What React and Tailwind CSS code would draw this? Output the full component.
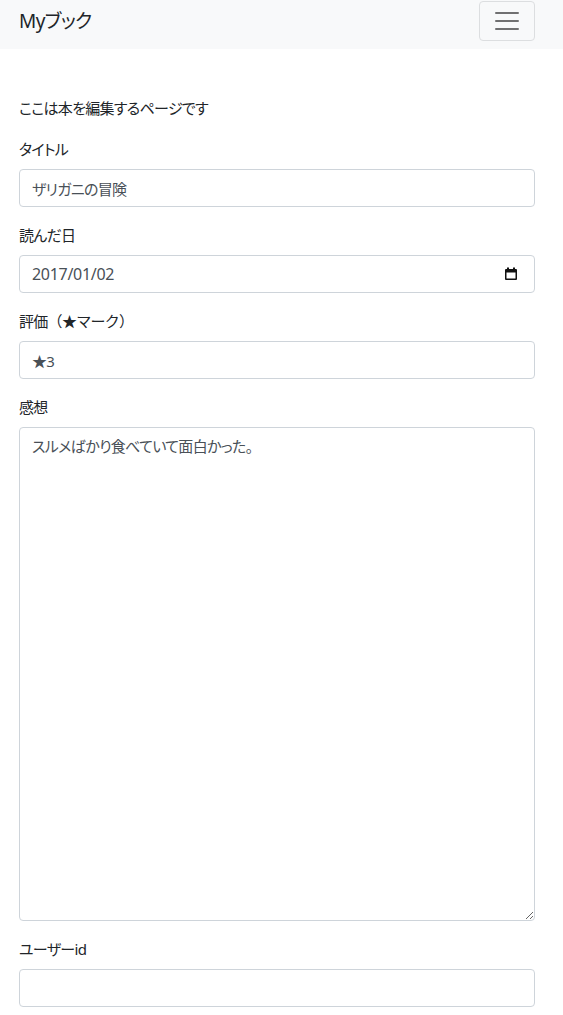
export default function App() {
  const font = { fontFamily: '"Noto Sans", "Noto Sans CJK JP", sans-serif' };
  const jp = "text-[15px] tracking-[-0.7px] [font-feature-settings:'palt']";
  const inputCls =
    "block w-full h-[38px] px-3 border border-[#ced4da] rounded-[4px] bg-white text-[#495057] outline-none " + "text-[15px] tracking-[-0.7px] [font-feature-settings:'palt']";
  return (
    <div className="min-h-[1015px] bg-white text-[#212529] text-[16px]" style={font}>
      <nav className="h-[49px] bg-[#f8f9fa] flex items-start justify-between pl-[19px] pr-[28px]">
        <span className="text-[19px] tracking-[-0.6px] leading-[30px] mt-[6px] [font-feature-settings:'palt']">Myブック</span>
        <button className="mt-[1px] w-[56px] h-[40px] border border-[#dcdee0] rounded-[4px] flex items-center justify-center">
          <svg width="30" height="30" viewBox="0 0 30 30">
            <path d="M4 7h22M4 15h22M4 23h22" stroke="rgba(0,0,0,0.55)" strokeWidth="2" strokeLinecap="round" />
          </svg>
        </button>
      </nav>
      <main className="pl-[19px] pr-[28px] pt-[47px]">
        <p className={"leading-6 mb-[17px] " + "text-[15px] tracking-[-0.7px] [font-feature-settings:'palt']"}>ここは本を編集するページです</p>
        <div className="mb-4">
          <label className={"block leading-6 mb-2 " + "text-[15px] tracking-[-0.7px] [font-feature-settings:'palt']"}>タイトル</label>
          <input className={inputCls} readOnly value="ザリガニの冒険" />
        </div>
        <div className="mb-4">
          <label className={"block leading-6 mb-2 " + "text-[15px] tracking-[-0.7px] [font-feature-settings:'palt']"}>読んだ日</label>
          <div className="flex items-center justify-between w-full h-[38px] pl-3 pr-[16px] border border-[#ced4da] rounded-[4px] bg-white text-[#495057]">
            <span className="tracking-[-0.3px]">2017/01/02</span>
            <svg width="14" height="14" viewBox="0 0 14 14">
              <rect x="1" y="2" width="12" height="11" rx="1" fill="#111" />
              <rect x="2.5" y="5.5" width="9" height="6" fill="#fff" />
              <rect x="3" y="0.5" width="2" height="2.5" fill="#111" />
              <rect x="9" y="0.5" width="2" height="2.5" fill="#111" />
            </svg>
          </div>
        </div>
        <div className="mb-4">
          <label className={"block leading-6 mb-2 " + "text-[15px] tracking-[-0.7px]"}>評価（★マーク）</label>
          <input className={inputCls} readOnly value="★3" />
        </div>
        <div className="mb-4">
          <label className={"block leading-6 mb-2 " + "text-[15px] tracking-[-0.7px] [font-feature-settings:'palt']"}>感想</label>
          <textarea
            className="block w-full h-[494px] px-3 py-[6px] border border-[#ced4da] rounded-[4px] bg-white leading-6 text-[#495057] outline-none text-[15px] tracking-[-0.7px] [font-feature-settings:'palt']"
            readOnly
            value="スルメばかり食べていて面白かった。"
          />
        </div>
        <div className="mb-4">
          <label className={"block leading-6 mb-2 " + "text-[15px] tracking-[-0.7px] [font-feature-settings:'palt']"}>ユーザーid</label>
          <input className={inputCls} readOnly value="" />
        </div>
      </main>
    </div>
  );
}
